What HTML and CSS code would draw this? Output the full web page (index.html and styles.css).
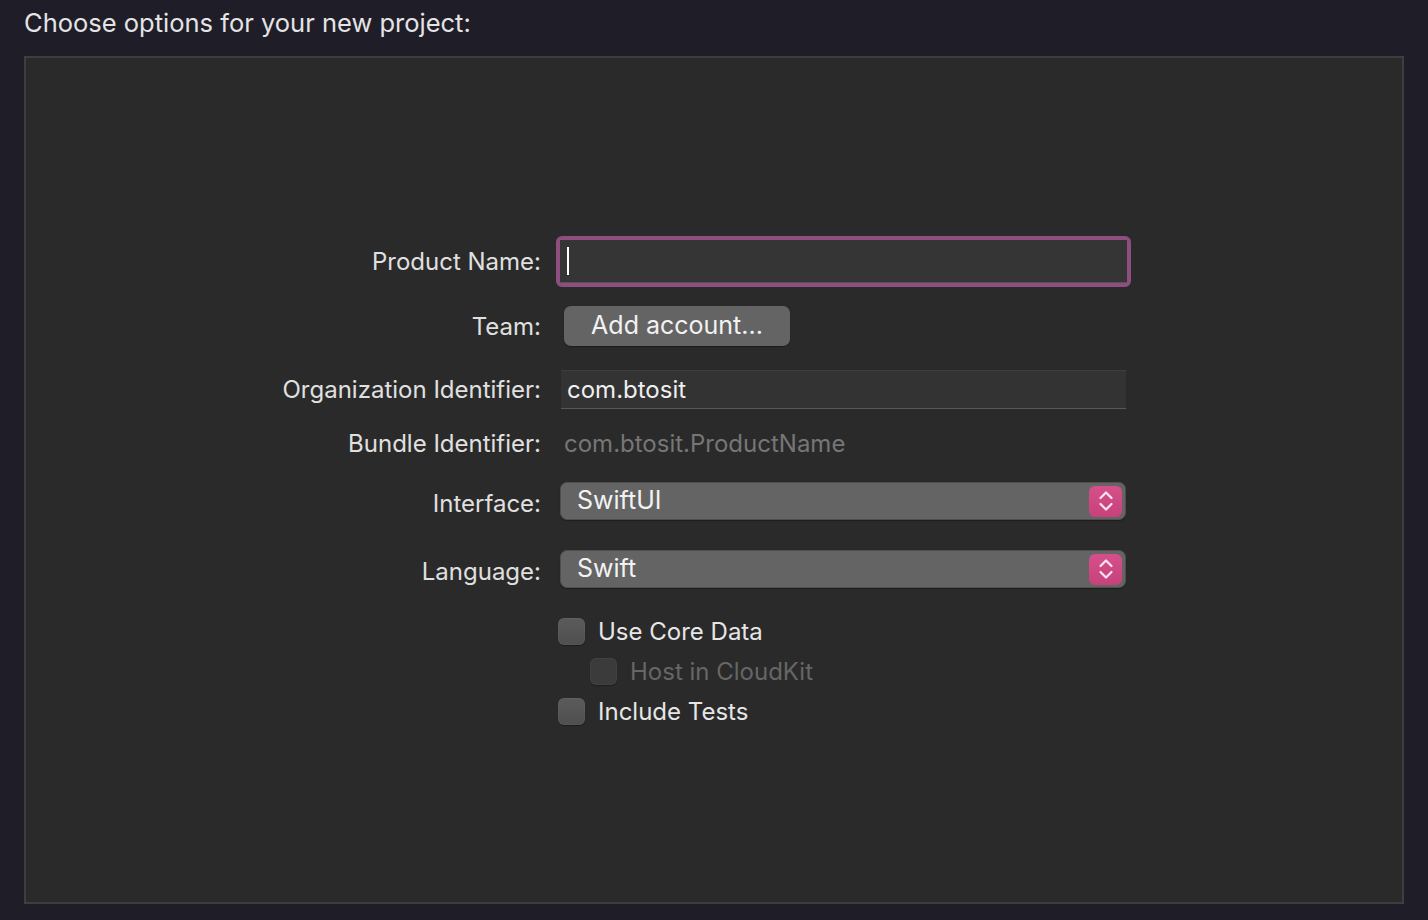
FILE: index.html
```html
<!DOCTYPE html>
<html>
<head>
<meta charset="utf-8">
<link rel="stylesheet" href="styles.css">
</head>
<body>
<div class="page">
  <h1 class="title">Choose options for your new project:</h1>
  <div class="panel">
    <div class="form">
      <div class="label r1">Product Name:</div>
      <div class="ctrl r1">
        <div class="focus-ring"><div class="field"><span class="caret"></span></div></div>
      </div>

      <div class="label r2">Team:</div>
      <div class="ctrl r2 ctrl-pad"><button class="btn">Add account...</button></div>

      <div class="label r3">Organization Identifier:</div>
      <div class="ctrl r3 ctrl-pad5"><div class="field plain">com.btosit</div></div>

      <div class="label r4">Bundle Identifier:</div>
      <div class="ctrl r4 ctrl-pad"><span class="muted">com.btosit.ProductName</span></div>

      <div class="label r5">Interface:</div>
      <div class="ctrl r5 ctrl-pad4">
        <div class="popup"><span class="popup-text">SwiftUI</span>
          <span class="stepper"><svg width="18" height="24" viewBox="0 0 18 24"><path d="M3.5 9 L9 3.5 L14.5 9 M3.5 15 L9 20.5 L14.5 15" fill="none" stroke="#fbe6f0" stroke-width="2.2" stroke-linecap="round" stroke-linejoin="round"/></svg></span>
        </div>
      </div>

      <div class="label r6">Language:</div>
      <div class="ctrl r6 ctrl-pad4">
        <div class="popup"><span class="popup-text">Swift</span>
          <span class="stepper"><svg width="18" height="24" viewBox="0 0 18 24"><path d="M3.5 9 L9 3.5 L14.5 9 M3.5 15 L9 20.5 L14.5 15" fill="none" stroke="#fbe6f0" stroke-width="2.2" stroke-linecap="round" stroke-linejoin="round"/></svg></span>
        </div>
      </div>

      <div class="checks">
        <label class="check"><span class="box"></span><span>Use Core Data</span></label>
        <label class="check sub disabled"><span class="box"></span><span>Host in CloudKit</span></label>
        <label class="check"><span class="box"></span><span>Include Tests</span></label>
      </div>
    </div>
  </div>
</div>
</body>
</html>
```

FILE: styles.css
```css
* { box-sizing: border-box; }
html, body { margin: 0; padding: 0; }
body {
  background: #1f1d27;
  font-family: "Inter", "Liberation Sans", sans-serif;
  color: #e6e6e6;
  width: 1428px;
  height: 920px;
  overflow: hidden;
}
.page { padding: 0 24px 0 24px; }
.title {
  margin: 0;
  height: 56px;
  padding-top: 7px;
  font-size: 25.5px;
  font-weight: 400;
  color: #e4e4e6;
  letter-spacing: 0;
}
.panel {
  width: 1380px;
  height: 848px;
  background: #2a2a2a;
  border: 2px solid #3e3e3e;
}
.form {
  display: grid;
  grid-template-columns: 515px 585px;
  column-gap: 15px;
  padding-top: 178px;
}
.label {
  text-align: right;
  font-size: 24px;
  color: #e0e0e0;
  display: flex;
  align-items: center;
  justify-content: flex-end;
}
.ctrl { display: flex; align-items: center; }
.ctrl-pad { padding-left: 8px; }
.ctrl-pad5 { padding-left: 5px; }
.ctrl-pad4 { padding-left: 4px; }
.r1 { height: 51px; }
.r2 { height: 40px; margin-top: 19px; }
.r3 { height: 39px; margin-top: 24px; }
.r4 { height: 28px; margin-top: 20px; }
.r5 { height: 38px; margin-top: 25px; }
.r5.label, .r6.label { padding-top: 4px; }
.r6 { height: 38px; margin-top: 30px; }

.focus-ring {
  width: 575px;
  height: 51px;
  border: 4px solid #8d4f7f;
  border-radius: 6px;
}
.field {
  height: 100%;
  background: #353535;
  border-bottom: 1px solid #555;
  display: flex;
  align-items: center;
  padding-left: 7px;
  font-size: 24px;
  color: #efefef;
}
.caret {
  display: block;
  width: 2px;
  height: 28px;
  background: #fff;
}
.field.plain {
  width: 565px;
  height: 39px;
  background: #333333;
  border-top: 1px solid #3d3d3d;
  border-bottom: 1px solid #585858;
  padding-left: 6px;
}
.btn {
  width: 226px;
  height: 40px;
  background: #646464;
  border: none;
  border-radius: 7px;
  box-shadow: 0 1px 1px rgba(0,0,0,0.35);
  color: #f2f2f2;
  font-family: inherit;
  font-size: 25px;
  padding: 0 0 2px 0;
}
.muted { font-size: 24px; color: #767676; }
.popup {
  width: 566px;
  height: 38px;
  background: #646464;
  border: 1px solid #4f4f4f;
  border-radius: 7px;
  display: flex;
  align-items: center;
  justify-content: space-between;
  padding: 0 3px 0 16px;
  box-shadow: 0 1px 1px rgba(0,0,0,0.3);
}
.popup-text { font-size: 25px; color: #f2f2f2; padding-bottom: 3px; }
.stepper {
  width: 33px;
  height: 31px;
  border-radius: 6px;
  background: linear-gradient(#d5508a, #c7427b);
  display: flex;
  align-items: center;
  justify-content: center;
}
.checks {
  grid-column: 2;
  margin-top: 30px;
  display: flex;
  flex-direction: column;
  gap: 13px;
  padding-left: 2px;
}
.check {
  display: flex;
  align-items: center;
  gap: 13px;
  height: 27px;
  font-size: 24px;
  color: #e6e6e6;
}
.box {
  width: 27px;
  height: 27px;
  border-radius: 6px;
  background: linear-gradient(#5b5b5b, #4f4f4f);
  box-shadow: inset 0 0 0 1px rgba(255,255,255,0.04), 0 1px 1px rgba(0,0,0,0.3);
}
.check.sub { padding-left: 32px; }
.check.disabled { color: #666666; }
.check.disabled .box { background: #3b3b3b; }
```
